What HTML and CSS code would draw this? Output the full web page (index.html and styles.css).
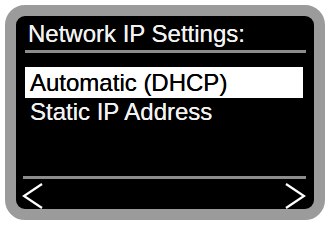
FILE: index.html
```html
<!DOCTYPE html>
<html lang="en">
<head>
    <meta charset="UTF-8">
    <title>Network IP Settings</title>
    <link rel="stylesheet" href="styles.css">
</head>
<body>
    <div class="screen">
        <div class="title">Network IP Settings:</div>
        <div class="rule"></div>
        <div class="menu">
            <div class="item selected">Automatic (DHCP)</div>
            <div class="item">Static IP Address</div>
        </div>
        <div class="rule rule-bottom"></div>
        <div class="nav">
            <svg class="arrow" width="22" height="26" viewBox="0 0 22 26">
                <polyline points="20,1 2,13 20,25" fill="none" stroke="#fff" stroke-width="2.2"/>
            </svg>
            <svg class="arrow" width="22" height="26" viewBox="0 0 22 26">
                <polyline points="2,1 20,13 2,25" fill="none" stroke="#fff" stroke-width="2.2"/>
            </svg>
        </div>
    </div>
</body>
</html>
```

FILE: styles.css
```css
body {
    margin: 0;
    background: #fff;
    font-family: "Liberation Sans", Arial, sans-serif;
}
.screen {
    box-sizing: border-box;
    margin: 5px;
    width: 320px;
    height: 215px;
    border: 11px solid #9b9b9b;
    border-radius: 20px;
    background: #000;
    display: flex;
    flex-direction: column;
    padding: 4px 8px 0 9px;
    color: #f2f2f2;
}
.title {
    font-size: 24px;
    line-height: 27px;
    padding-left: 3px;
    text-shadow: 0 0 0.6px currentColor;
}
.rule {
    height: 3px;
    background: #8c8c8c;
    margin-top: 3px;
}
.menu {
    margin-top: 14px;
    font-size: 24px;
}
.item {
    line-height: 27px;
    padding-left: 5px;
    text-shadow: 0 0 0.6px currentColor;
}
.selected {
    background: #fff;
    color: #000;
    line-height: 31px;
    margin-right: 3px;
}
.rule-bottom {
    margin-top: auto;
    margin-left: -2px;
}
.nav {
    display: flex;
    justify-content: space-between;
    height: 30px;
    padding: 4px 0 0 0;
    box-sizing: border-box;
    margin-left: -3px;
}
.arrow {
    display: block;
}
```
